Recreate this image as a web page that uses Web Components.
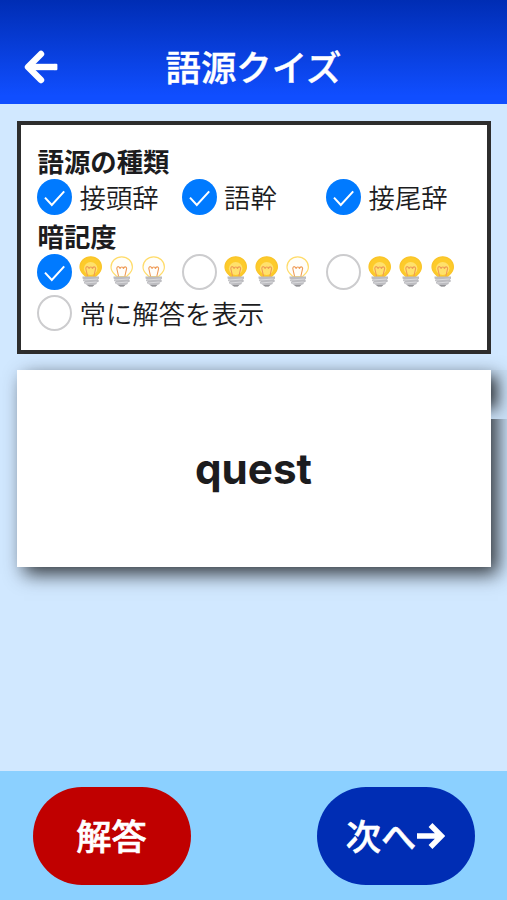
<!DOCTYPE html>
<html lang="ja">
<head>
<meta charset="utf-8">
<meta name="viewport" content="width=device-width, initial-scale=1">
<title>語源クイズ</title>
<style>
  html, body {
    margin: 0;
    height: 100%;
    overflow: hidden;
    font-family: "Noto Sans CJK JP", sans-serif;
    color: #1c1c1e;
  }
</style>
</head>
<body>
<quiz-app></quiz-app>

<script>
function define(name, html) {
  const template = document.createElement("template");
  template.innerHTML = html;

  customElements.define(name, class extends HTMLElement {
    constructor() {
      super();
      this.attachShadow({ mode: "open" });
      this.shadowRoot.appendChild(template.content.cloneNode(true));
    }
  });
}

define("quiz-header", `
  <style>
    :host {
      box-sizing: border-box;
      display: grid;
      grid-template-columns: 82px 1fr 82px;
      align-items: center;
      height: 104px;
      padding-top: 30px;
      background: linear-gradient(#002db4, #104eff 92%);
      color: #fff;
    }
    svg {
      display: block;
      margin-left: 24px;
    }
    h1 {
      margin: 0 0 2px;
      font-size: 35.4px;
      font-weight: 500;
      line-height: 1;
      text-align: center;
      white-space: nowrap;
      -webkit-text-stroke: .4px;
    }
  </style>
  <svg width="36" height="36" viewBox="0 0 36 36" fill="none" stroke="#fff" stroke-width="6.4" stroke-linecap="round" stroke-linejoin="round">
    <path d="M17 5 4 18 17 31" />
    <path stroke-linecap="butt" d="M5 18h26" />
    <path stroke-width="2" d="M31 15.800h1.400v4.400H31z" />
  </svg>
  <h1><slot></slot></h1>
`);

define("filter-panel", `
  <style>
    :host {
      box-sizing: border-box;
      display: block;
      height: 233px;
      padding: 18px 16px 0;
      border: 4px solid #2d2d2d;
      background: #fff;
    }
  </style>
  <slot></slot>
`);

define("filter-title", `
  <style>
    :host {
      display: block;
      height: 36px;
      font-size: 26.4px;
      font-weight: 700;
      line-height: 35px;
      text-indent: .5px;
    }
  </style>
  <slot></slot>
`);

define("filter-row", `
  <style>
    :host {
      display: grid;
      grid-template-columns: 144.5px 144.5px 1fr;
      height: var(--row-height, 39px);
    }
  </style>
  <slot></slot>
`);

define("check-item", `
  <style>
    :host {
      display: flex;
      align-items: center;
      height: 36px;
      font-size: 26.4px;
      font-weight: 350;
      line-height: 36px;
      white-space: nowrap;
    }
    .box {
      box-sizing: border-box;
      flex: none;
      width: 35px;
      height: 36px;
      margin-right: 7.5px;
      border: 2px solid #ccccce;
      border-radius: 50%;
    }
    .mark {
      display: none;
    }
    :host([checked]) .box {
      border: 0;
      background: #007aff;
    }
    :host([checked]) .mark {
      display: block;
    }
    .label {
      display: flex;
    }
  </style>
  <div class="box">
    <svg class="mark" width="35" height="36" viewBox="0 0 35 36" fill="none" stroke="#fff" stroke-width="2">
      <path d="M8 18.600 14.800 26 27.200 12.400" />
    </svg>
  </div>
  <div class="label"><slot></slot></div>
`);

define("light-bulb", `
  <style>
    :host {
      display: block;
      width: 24px;
      height: 32px;
      margin-right: 7.4px;
      margin-left: -.5px;
    }
    :host(:not(:first-child)) {
      margin-left: 0;
    }
    svg {
      display: block;
    }
    .glass {
      fill: #fffefa;
      stroke: #ffdc6b;
    }
    .glow {
      display: none;
    }
    :host([on]) .glass {
      fill: #fdcb2b;
      stroke: #fac52a;
    }
    :host([on]) .glow {
      display: block;
    }
  </style>
  <svg width="24" height="32" viewBox="0 0 24 32">
    <path class="glass" stroke-width="1.2" d="M6.800 20.500C5.800 18.500 1 17 1 11a10.700 10.200 0 0 1 21.400 0c0 6-4.800 7.500-5.800 9.500z" />
    <ellipse class="glow" cx="11.700" cy="12.500" rx="6.800" ry="6.500" fill="#ffe16c" />
    <path fill="none" stroke="#ef9a55" stroke-width="1.1" d="M8.600 20.500 6.800 12.500c.5-3 3-2 3.200.3.500-2.500 3.200-2.500 3.400 0 .4-2.500 3.300-2.500 3.200-.2L14.800 20.500" />
    <path fill="#bcbcc0" d="M3.500 20.500H20v2.300l-1.300.5 1 .7v1.800l-2 .8v1.400l-2.300 1-1.500 1.600h-3.900L8 29l-3-1.700v-1l1-.5-2-.8v-1.200l1-.6-1.500-.7z" />
    <path fill="none" stroke="#e2e2e4" stroke-width=".8" d="m4.500 24 14-1M6 27l11.500-1" />
    <path fill="#929296" d="M8 29h7.200l-1.600 1.600h-3.500z" />
  </svg>
`);

define("word-card", `
  <style>
    :host {
      position: relative;
      box-sizing: border-box;
      display: flex;
      align-items: center;
      justify-content: center;
      height: 197px;
      margin-top: 16px;
      padding: 2px 1px 0 0;
      background: #fff;
      box-shadow: 7px 7px 18px rgba(0, 0, 0, .77);
      font: 700 42.2px Inter, sans-serif;
      line-height: 1;
    }
    /* break in the shadow beside the upper right edge */
    .gap {
      position: absolute;
      top: 0;
      left: 100%;
      width: 16px;
      height: 49px;
      overflow: hidden;
      background: #c8def4;
    }
    .gap::before {
      content: "";
      position: absolute;
      left: -60px;
      top: 0;
      width: 60px;
      height: 33px;
      box-shadow: 6px 6px 15px rgba(0, 0, 0, .78);
    }
    .word {
      display: block;
    }
  </style>
  <div class="gap"></div>
  <span class="word"><slot></slot></span>
`);

define("pill-button", `
  <style>
    :host {
      display: block;
    }
    button {
      box-sizing: border-box;
      display: flex;
      align-items: center;
      justify-content: center;
      width: 158px;
      height: 98px;
      margin: 0;
      padding: 0 1px 2px 0;
      border: 0;
      border-radius: 49px;
      background: var(--pill-color, #002db4);
      color: #fff;
      font: inherit;
      font-size: 35.2px;
      font-weight: 500;
      line-height: 1;
      -webkit-text-stroke: .6px;
    }
  </style>
  <button type="button"><slot></slot></button>
`);

define("quiz-footer", `
  <style>
    :host {
      box-sizing: border-box;
      display: flex;
      justify-content: space-between;
      height: 129px;
      padding: 16px 32px 0 33px;
      background: #8bd0ff;
    }
  </style>
  <slot></slot>
`);

define("quiz-app", `
  <style>
    :host {
      display: flex;
      flex-direction: column;
      height: 100vh;
      background: #d1e8ff;
    }
    main {
      flex: 1;
      padding: 17px 16px 0 17px;
    }
    .bulbs {
      --row-height: 41px;
    }
    .next-arrow {
      display: block;
      margin-top: 2px;
    }
  </style>
  <quiz-header>語源クイズ</quiz-header>
  <main>
    <filter-panel>
      <filter-title>語源の種類</filter-title>
      <filter-row>
        <check-item checked>接頭辞</check-item>
        <check-item checked>語幹</check-item>
        <check-item checked>接尾辞</check-item>
      </filter-row>
      <filter-title>暗記度</filter-title>
      <filter-row class="bulbs">
        <check-item checked><light-bulb on></light-bulb><light-bulb></light-bulb><light-bulb></light-bulb></check-item>
        <check-item><light-bulb on></light-bulb><light-bulb on></light-bulb><light-bulb></light-bulb></check-item>
        <check-item><light-bulb on></light-bulb><light-bulb on></light-bulb><light-bulb on></light-bulb></check-item>
      </filter-row>
      <check-item>常に解答を表示</check-item>
    </filter-panel>
    <word-card>quest</word-card>
  </main>
  <quiz-footer>
    <pill-button style="--pill-color: #c00000">解答</pill-button>
    <pill-button>次へ<svg class="next-arrow" width="29" height="28" viewBox="0 0 29 28" fill="none" stroke="#fff" stroke-width="5.4">
      <path d="M1 14h24M14.500 3 25.500 14 14.500 25" />
    </svg></pill-button>
  </quiz-footer>
`);
</script>
</body>
</html>
